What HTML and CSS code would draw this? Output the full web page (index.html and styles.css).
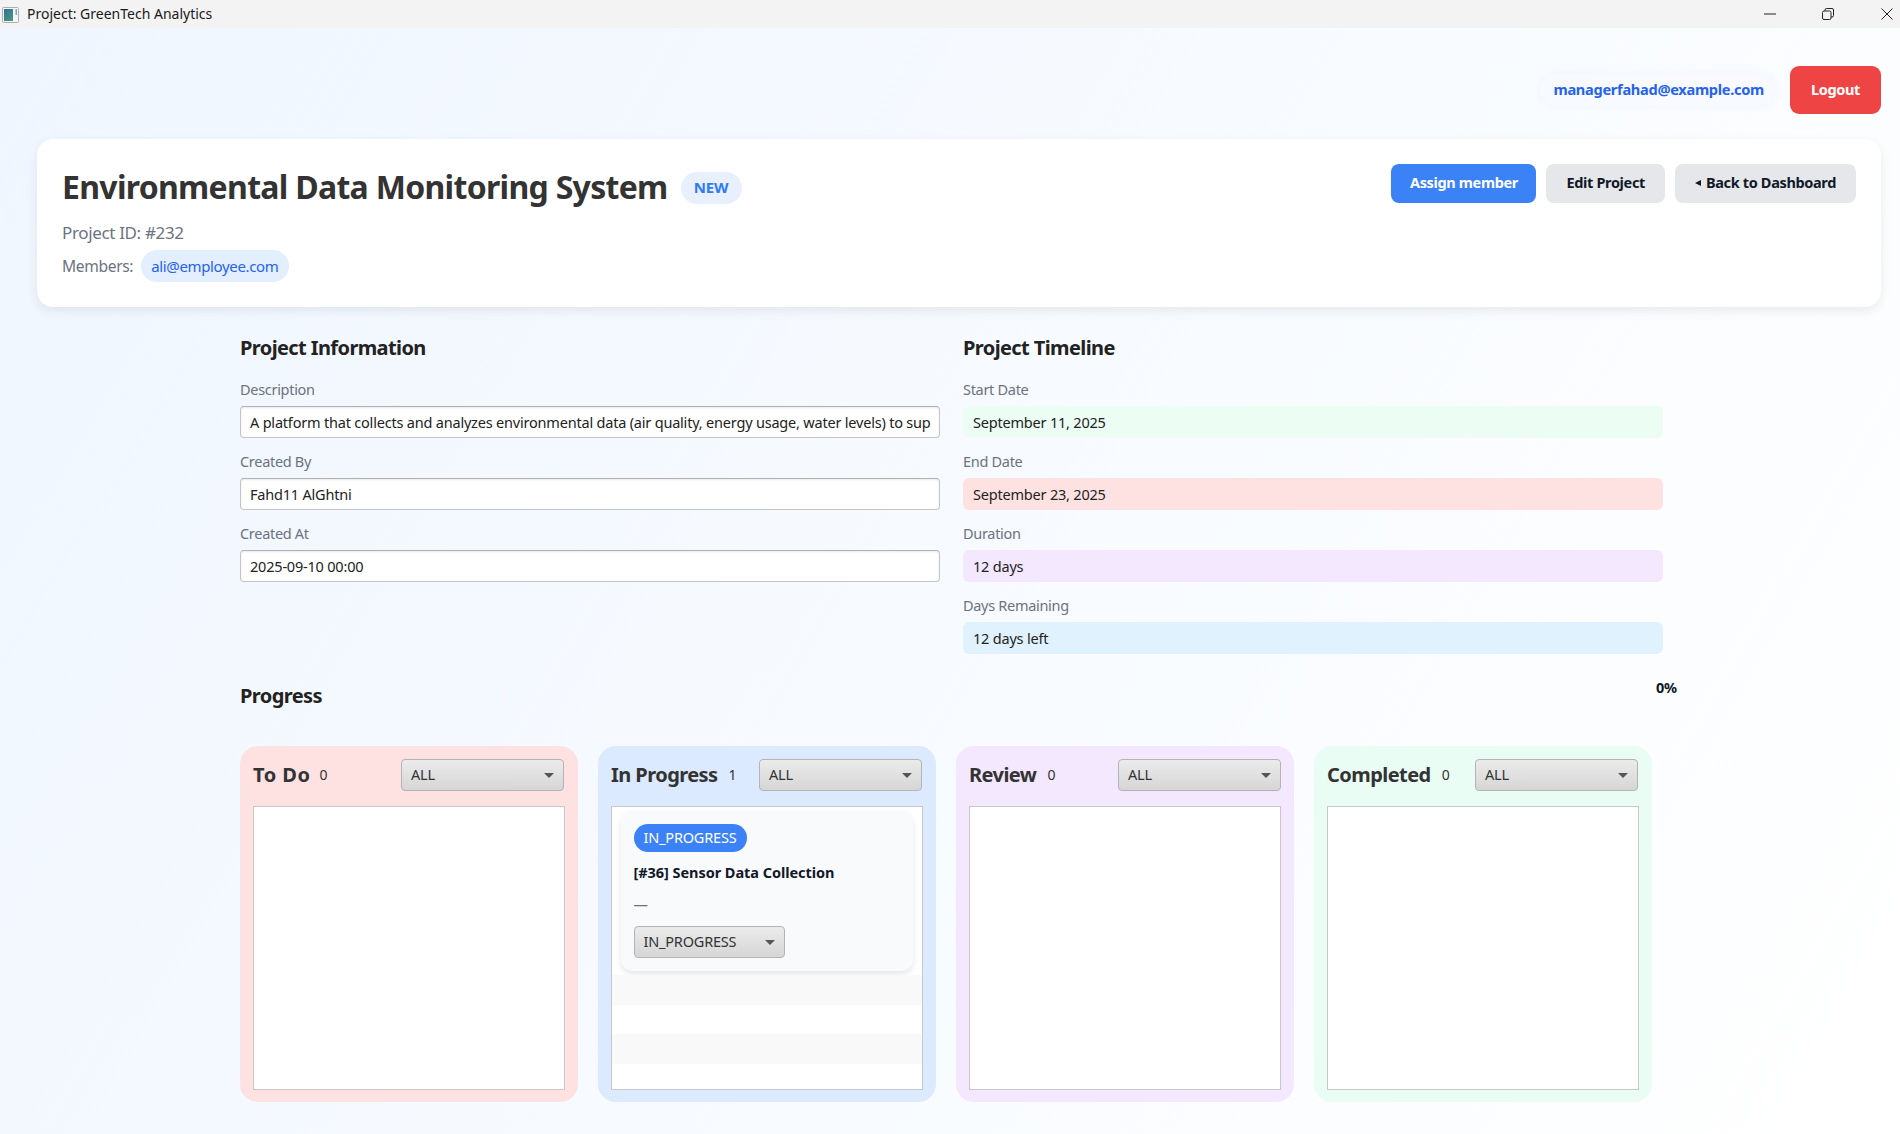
FILE: index.html
```html
<!DOCTYPE html>
<html lang="en">
<head>
  <meta charset="UTF-8">
  <title>Project: GreenTech Analytics</title>
  <link rel="stylesheet" href="styles.css">
</head>
<body>

  <div class="titlebar">
    <svg class="app-icon" width="20" height="20" viewBox="0 0 20 20">
      <rect x="1.5" y="3.500" width="16" height="15" rx="1" fill="#f4f6f6" stroke="#a9b0b0"/>
      <defs>
        <linearGradient id="appFill" x1="0" y1="0" x2="1" y2="1">
          <stop offset="0" stop-color="#2f6f9c"/>
          <stop offset="1" stop-color="#4f9a78"/>
        </linearGradient>
      </defs>
      <rect x="3" y="5" width="9" height="12" fill="url(#appFill)"/>
      <rect x="14.500" y="5" width="1.500" height="6" fill="#7fa6c4"/>
    </svg>
    <span class="window-title">Project: GreenTech Analytics</span>
    <div class="window-controls">
      <svg class="ctl-min" width="12" height="12" viewBox="0 0 12 12"><path d="M0 6h12" stroke="#222" fill="none"/></svg>
      <svg class="ctl-max" width="12" height="12" viewBox="0 0 12 12"><path d="M.5 4.500a1.500 1.500 0 0 1 1.500-1.500h5.500a1.500 1.500 0 0 1 1.500 1.500v5.500a1.500 1.500 0 0 1-1.500 1.500h-5.500a1.500 1.500 0 0 1-1.500-1.500zM3 3v-1a1.500 1.500 0 0 1 1.500-1.500h5.500a1.500 1.500 0 0 1 1.500 1.500v5.500a1.500 1.500 0 0 1-1.500 1.500h-1" stroke="#222" fill="none"/></svg>
      <svg class="ctl-close" width="12" height="12" viewBox="0 0 12 12"><path d="M.5.5l11 11M11.500.5l-11 11" stroke="#222" fill="none"/></svg>
    </div>
  </div>

  <div class="userbar">
    <span class="user-email">managerfahad@example.com</span>
    <button class="btn btn-logout">Logout</button>
  </div>

  <div class="project-card">
    <div class="project-top">
      <div class="project-head">
        <h1>Environmental Data Monitoring System</h1>
        <span class="status-new">NEW</span>
      </div>
      <div class="project-actions">
        <button class="btn btn-blue">Assign member</button>
        <button class="btn btn-grey">Edit Project</button>
        <button class="btn btn-grey"><span class="back-arrow"></span>Back to Dashboard</button>
      </div>
    </div>
    <div class="project-id">Project ID: #232</div>
    <div class="project-members">
      <span class="members-label">Members:</span>
      <span class="member-chip">ali@employee.com</span>
    </div>
  </div>

  <div class="main">
    <div class="info-grid">
      <div>
        <h2>Project Information</h2>
        <div class="field">
          <label>Description</label>
          <div class="value value-input">A platform that collects and analyzes environmental data (air quality, energy usage, water levels) to sup</div>
        </div>
        <div class="field">
          <label>Created By</label>
          <div class="value value-input">Fahd11 AlGhtni</div>
        </div>
        <div class="field">
          <label>Created At</label>
          <div class="value value-input">2025-09-10 00:00</div>
        </div>
      </div>
      <div>
        <h2>Project Timeline</h2>
        <div class="field">
          <label>Start Date</label>
          <div class="value green">September 11, 2025</div>
        </div>
        <div class="field">
          <label>End Date</label>
          <div class="value red">September 23, 2025</div>
        </div>
        <div class="field">
          <label>Duration</label>
          <div class="value purple">12 days</div>
        </div>
        <div class="field">
          <label>Days Remaining</label>
          <div class="value sky">12 days left</div>
        </div>
      </div>
    </div>

    <div class="progress-row">
      <h2>Progress</h2>
      <span class="progress-pct">0%</span>
    </div>

    <div class="board">
      <div class="column col-todo">
        <div class="column-head">
          <span class="column-name">To Do</span>
          <span class="column-count">0</span>
          <div class="combo combo-filter">ALL</div>
        </div>
        <div class="task-list"></div>
      </div>

      <div class="column col-progress">
        <div class="column-head">
          <span class="column-name">In Progress</span>
          <span class="column-count">1</span>
          <div class="combo combo-filter">ALL</div>
        </div>
        <div class="task-list">
          <div class="task-row">
            <div class="task-card">
              <span class="task-status">IN_PROGRESS</span>
              <div class="task-title">[#36] Sensor Data Collection</div>
              <div class="task-desc">—</div>
              <div class="combo combo-task">IN_PROGRESS</div>
            </div>
          </div>
          <div class="empty-row stripe"></div>
          <div class="empty-row"></div>
          <div class="empty-row stripe"></div>
        </div>
      </div>

      <div class="column col-review">
        <div class="column-head">
          <span class="column-name">Review</span>
          <span class="column-count">0</span>
          <div class="combo combo-filter">ALL</div>
        </div>
        <div class="task-list"></div>
      </div>

      <div class="column col-done">
        <div class="column-head">
          <span class="column-name">Completed</span>
          <span class="column-count">0</span>
          <div class="combo combo-filter">ALL</div>
        </div>
        <div class="task-list"></div>
      </div>
    </div>
  </div>

</body>
</html>
```

FILE: styles.css
```css
* {
  box-sizing: border-box;
}

html, body {
  margin: 0;
  height: 100%;
  overflow: hidden;
}

body {
  font-family: "Noto Sans", "Open Sans", sans-serif;
  background: linear-gradient(120deg, #eff6ff, #ffffff);
  color: #111827;
  letter-spacing: -0.2px;
}

.titlebar {
  display: flex;
  align-items: center;
  height: 28px;
  background-color: #f3f3f3;
  padding-left: 1px;
}

.app-icon {
  flex: none;
}

.window-title {
  margin-left: 6px;
  padding-bottom: 2px;
  font-size: 14px;
  color: #1a1a1a;
  letter-spacing: 0;
}

.window-controls {
  margin-left: auto;
  display: flex;
  align-items: center;
  padding-right: 7px;
}

.ctl-max {
  margin-left: 46px;
}

.ctl-close {
  margin-left: 47px;
}

.userbar {
  display: flex;
  justify-content: flex-end;
  align-items: center;
  gap: 14px;
  height: 48px;
  margin-top: 38px;
  padding-right: 19px;
}

.user-email {
  font-size: 14.6px;
  font-weight: 700;
  color: #2563eb;
  letter-spacing: -0.3px;
  padding: 5px 12px 7px 14px;
  border-radius: 16px;
  background-color: #f8faff;
  box-shadow: 0 0 8px rgba(59, 130, 246, 0.06);
}

.btn {
  border: none;
  border-radius: 8px;
  font-family: inherit;
  font-size: 14.5px;
  font-weight: 700;
  letter-spacing: -0.35px;
  height: 39px;
  padding: 0 20px 3px;
}

.btn-logout {
  width: 91px;
  height: 48px;
  border-radius: 9px;
  padding: 0 0 2px;
  background-color: #ef4444;
  color: white;
}

.btn-blue {
  width: 145px;
  padding: 0 0 3px;
  background-color: #3b82f6;
  color: white;
}

.btn-grey {
  background-color: #e5e7eb;
  color: #111827;
}

.back-arrow {
  display: inline-block;
  width: 0;
  height: 0;
  margin-right: 5px;
  vertical-align: 2px;
  border-top: 3px solid transparent;
  border-bottom: 3px solid transparent;
  border-right: 6px solid #111827;
}

.project-card {
  height: 168px;
  margin: 25px 19px 0 37px;
  padding: 25px 25px 0 25px;
  background-color: white;
  border-radius: 16px;
  box-shadow: 0 4px 12px rgba(0, 0, 0, 0.08);
}

.project-top {
  display: flex;
  justify-content: space-between;
  height: 47px;
}

.project-head {
  display: flex;
  align-items: center;
  height: 47px;
}

h1 {
  margin: 0;
  padding-bottom: 2px;
  font-size: 32px;
  font-weight: 700;
  color: #333333;
  letter-spacing: -0.7px;
}

.status-new {
  margin-left: 13px;
  width: 61px;
  height: 32px;
  border-radius: 16px;
  background-color: #e8f0fe;
  color: #2f7bf5;
  font-size: 15px;
  font-weight: 700;
  text-align: center;
  line-height: 31px;
}

.project-actions {
  display: flex;
  gap: 10px;
}

.project-id {
  margin-top: 9px;
  font-size: 17px;
  line-height: 26px;
  color: #6b7280;
  letter-spacing: -0.35px;
}

.project-members {
  display: flex;
  align-items: center;
  margin-top: 4px;
  height: 32px;
}

.members-label {
  font-size: 15.6px;
  color: #6b7280;
  letter-spacing: -0.35px;
}

.member-chip {
  margin-left: 8px;
  padding: 0 10px;
  line-height: 32px;
  border-radius: 16px;
  background-color: #e3eeff;
  color: #2563eb;
  font-size: 15px;
  letter-spacing: -0.35px;
}

.main {
  width: 1437px;
  margin-left: 240px;
  padding-top: 27px;
}

.info-grid {
  display: grid;
  grid-template-columns: 700px 700px;
  gap: 23px;
  height: 344px;
}

h2 {
  margin: 0 0 18px;
  font-size: 20px;
  font-weight: 700;
  line-height: 28px;
  color: #222222;
  letter-spacing: -0.6px;
}

.field {
  margin-bottom: 14px;
}

label {
  display: block;
  height: 20px;
  line-height: 18px;
  margin-bottom: 6px;
  font-size: 14.5px;
  color: #6b7280;
  letter-spacing: -0.3px;
}

.value {
  height: 32px;
  line-height: 32px;
  padding: 0 10px;
  border-radius: 6px;
  font-size: 14.5px;
  white-space: nowrap;
  overflow: hidden;
  color: #222222;
}

.value-input {
  background-color: white;
  border: 1px solid #c4c4c4;
  border-top-color: #b0b0b0;
  border-radius: 4px;
  padding: 0 9px;
  line-height: 30px;
  box-shadow: inset 0 1px 2px rgba(0, 0, 0, 0.08);
}

.green {
  background-color: #ecfdf3;
}

.red {
  background-color: #fee2e2;
}

.purple {
  background-color: #f3e8ff;
}

.sky {
  background-color: #e0f2fe;
}

.progress-row {
  display: flex;
  justify-content: space-between;
  align-items: flex-start;
  height: 32px;
}

.progress-row h2 {
  margin: 4px 0 0;
}

.progress-pct {
  font-size: 14.5px;
  font-weight: 700;
  line-height: 19px;
  color: #111827;
}

.board {
  display: flex;
  gap: 20px;
  margin-top: 36px;
}

.column {
  width: 338px;
  height: 356px;
  padding: 13px 13px 12px;
  border-radius: 18px;
}

.col-todo {
  background-color: #fee2e2;
}

.col-progress {
  background-color: #dbeafe;
}

.col-review {
  background-color: #f3e8ff;
}

.col-done {
  background-color: #e9fdf4;
}

.column-head {
  display: flex;
  align-items: center;
  height: 32px;
  margin-bottom: 15px;
}

.column-name {
  padding-bottom: 1px;
  font-size: 20px;
  font-weight: 700;
  color: #333333;
  letter-spacing: -0.55px;
}

.col-todo .column-name {
  letter-spacing: 0.5px;
}

.column-count {
  margin-left: 11px;
  padding-bottom: 2px;
  font-size: 14px;
  color: #333333;
}

.col-todo .column-count {
  margin-left: 9px;
}

.combo {
  position: relative;
  height: 32px;
  line-height: 29px;
  padding-left: 9px;
  font-size: 14.5px;
  color: #333333;
  background: linear-gradient(#ebebeb, #d6d6d6);
  border: 1px solid #b4b4b4;
  border-radius: 4px;
}

.combo::after {
  content: "";
  position: absolute;
  right: 9px;
  top: 13px;
  border-top: 5px solid #555555;
  border-left: 5px solid transparent;
  border-right: 5px solid transparent;
}

.combo-filter {
  margin-left: auto;
  width: 163px;
}

.col-todo .combo-filter {
  width: 162.5px;
  margin-right: 1.5px;
}

.col-progress .combo-filter,
.col-done .combo-filter {
  margin-right: 1px;
}

.task-list {
  height: 284px;
  background-color: white;
  border: 1px solid #c8c8c8;
  overflow: hidden;
}

.task-row {
  height: 168px;
  padding: 4px 9px 4px 8.5px;
}

.task-card {
  height: 160px;
  padding: 13px;
  background-color: #f9fafb;
  border-radius: 12px;
  box-shadow: 0 3px 6px rgba(0, 0, 0, 0.1);
}

.task-status {
  display: inline-block;
  width: 113px;
  height: 28px;
  line-height: 27px;
  border-radius: 14px;
  background-color: #3b82f6;
  color: white;
  font-size: 14.5px;
  text-align: center;
}

.task-title {
  margin-top: 10px;
  font-size: 14.5px;
  font-weight: 700;
  line-height: 20px;
  color: #111827;
  letter-spacing: -0.05px;
}

.task-desc {
  margin-top: 12px;
  height: 20px;
  line-height: 20px;
  font-size: 14.5px;
  color: #6b7280;
}

.combo-task {
  margin-top: 12px;
  width: 151px;
}

.empty-row {
  height: 29.5px;
}

.stripe {
  background-color: #f9f9f9;
}
```
